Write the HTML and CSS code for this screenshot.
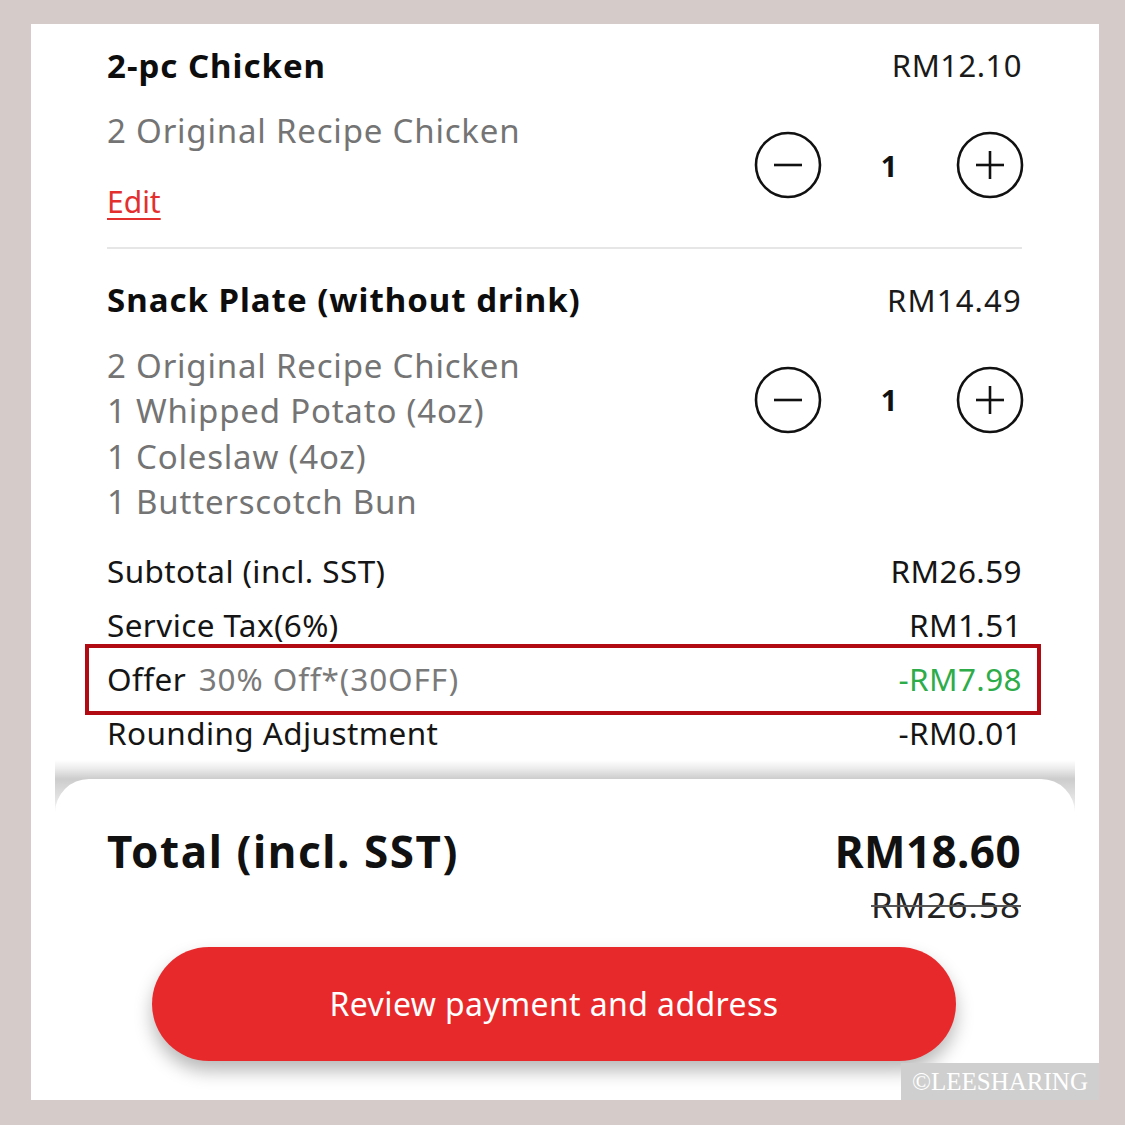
FILE: index.html
```html
<!DOCTYPE html>
<html>
<head>
<meta charset="utf-8">
<link rel="stylesheet" href="styles.css">
</head>
<body>
<div class="frame">
  <div class="content">
    <div class="item">
      <div class="item-head">
        <div class="item-title">2-pc Chicken</div>
        <div class="item-price">RM12.10</div>
      </div>
      <div class="item-body">
        <div class="item-info">
          <div class="desc">2 Original Recipe Chicken</div>
          <a class="edit">Edit</a>
        </div>
        <div class="qty">
          <svg class="qbtn" viewBox="0 0 68 68" width="68" height="68"><circle cx="34" cy="34" r="32" fill="none" stroke="#111" stroke-width="2.6"/><line x1="20" y1="34" x2="48" y2="34" stroke="#111" stroke-width="2.6"/></svg>
          <span class="qnum">1</span>
          <svg class="qbtn" viewBox="0 0 68 68" width="68" height="68"><circle cx="34" cy="34" r="32" fill="none" stroke="#111" stroke-width="2.6"/><line x1="20" y1="34" x2="48" y2="34" stroke="#111" stroke-width="2.6"/><line x1="34" y1="20" x2="34" y2="48" stroke="#111" stroke-width="2.6"/></svg>
        </div>
      </div>
    </div>
    <div class="divider"></div>
    <div class="item item2">
      <div class="item-head">
        <div class="item-title">Snack Plate (without drink)</div>
        <div class="item-price">RM14.49</div>
      </div>
      <div class="item-body">
        <div class="item-info">
          <div class="desc">2 Original Recipe Chicken</div>
          <div class="desc">1 Whipped Potato (4oz)</div>
          <div class="desc">1 Coleslaw (4oz)</div>
          <div class="desc">1 Butterscotch Bun</div>
        </div>
        <div class="qty">
          <svg class="qbtn" viewBox="0 0 68 68" width="68" height="68"><circle cx="34" cy="34" r="32" fill="none" stroke="#111" stroke-width="2.6"/><line x1="20" y1="34" x2="48" y2="34" stroke="#111" stroke-width="2.6"/></svg>
          <span class="qnum">1</span>
          <svg class="qbtn" viewBox="0 0 68 68" width="68" height="68"><circle cx="34" cy="34" r="32" fill="none" stroke="#111" stroke-width="2.6"/><line x1="20" y1="34" x2="48" y2="34" stroke="#111" stroke-width="2.6"/><line x1="34" y1="20" x2="34" y2="48" stroke="#111" stroke-width="2.6"/></svg>
        </div>
      </div>
    </div>
    <div class="summary">
      <div class="row"><span>Subtotal (incl. SST)</span><span>RM26.59</span></div>
      <div class="row"><span>Service Tax(6%)</span><span>RM1.51</span></div>
      <div class="row offer"><span>Offer <span class="code">30% Off*(30OFF)</span></span><span class="green">-RM7.98</span><div class="highlight"></div></div>
      <div class="row"><span>Rounding Adjustment</span><span>-RM0.01</span></div>
    </div>
  </div>
  <div class="sheet-wrap">
    <div class="sheet">
      <div class="total">
        <div class="total-label">Total (incl. SST)</div>
        <div class="total-prices">
          <div class="total-now">RM18.60</div>
          <div class="total-was">RM26.58</div>
        </div>
      </div>
      <div class="cta">Review payment and address</div>
    </div>
  </div>
  <div class="watermark">©LEESHARING</div>
</div>
</body>
</html>
```

FILE: styles.css
```css
html, body {
  margin: 0;
  padding: 0;
}
body {
  background: #d5cbc8;
  width: 1125px;
  height: 1125px;
  overflow: hidden;
  font-family: "Noto Sans", "Open Sans", sans-serif;
  color: #111;
}
.frame {
  position: relative;
  margin: 24px 26px 0 31px;
  height: 1076px;
  background: #fff;
  overflow: hidden;
}
.content {
  padding: 19px 77px 0 76px;
}
.item-head {
  display: flex;
  justify-content: space-between;
  align-items: center;
  height: 44px;
  margin-bottom: 21px;
}
.item-title {
  font-weight: 700;
  font-size: 33px;
  letter-spacing: 1px;
  color: #0d0d0d;
}
.item-price {
  font-size: 31px;
  letter-spacing: 0.5px;
  color: #1a1a1a;
}
.item2 .item-price {
  letter-spacing: 1.2px;
}
.item-body {
  display: flex;
  justify-content: space-between;
  align-items: flex-start;
}
.desc {
  font-size: 33px;
  line-height: 45.5px;
  letter-spacing: 0.8px;
  color: #747474;
}
.edit {
  display: inline-block;
  margin-top: 25px;
  font-size: 30px;
  line-height: 45px;
  color: #e3302f;
  text-decoration: underline;
  text-underline-offset: 5px;
  text-decoration-thickness: 2px;
}
.qty {
  display: flex;
  align-items: center;
  margin-top: 23px;
  margin-right: -2px;
}
.qbtn {
  display: block;
}
.qnum {
  width: 134px;
  text-align: center;
  font-weight: 700;
  font-size: 29px;
}
.divider {
  height: 2px;
  background: #e6e6e6;
  margin: 23px 0 29px;
}
.summary {
  margin-top: 19px;
}
.row {
  position: relative;
  display: flex;
  justify-content: space-between;
  align-items: center;
  height: 54px;
  font-size: 31.5px;
  letter-spacing: 0.4px;
  color: #151515;
}
.code {
  color: #7a7a7a;
  margin-left: 4px;
  letter-spacing: 0.9px;
}
.green {
  color: #2eac4a;
}
.highlight {
  position: absolute;
  left: -22px;
  right: -19px;
  top: -8px;
  bottom: -9px;
  border: 4px solid #b20a12;
}
.sheet-wrap {
  margin: 0 24px;
  padding-top: 19px;
  background: linear-gradient(to bottom, rgba(0, 0, 0, 0) 0px, rgba(0, 0, 0, 0.07) 8px, rgba(0, 0, 0, 0.2) 19px, rgba(0, 0, 0, 0.1) 40px, rgba(0, 0, 0, 0) 56px) no-repeat;
  background-size: 100% 56px;
  border-radius: 0 0 0 0;
}
.sheet {
  height: 341px;
  background: #fff;
  border-radius: 34px 34px 0 0;
  padding: 0 54px 0 52px;
}
.total {
  display: flex;
  justify-content: space-between;
  align-items: flex-start;
  padding-top: 44px;
}
.total-label {
  font-weight: 700;
  font-size: 44px;
  line-height: 56px;
  letter-spacing: 1.6px;
}
.total-prices {
  display: flex;
  flex-direction: column;
  align-items: flex-end;
}
.total-now {
  font-weight: 700;
  font-size: 44px;
  line-height: 56px;
  letter-spacing: 0.4px;
}
.total-was {
  font-size: 35px;
  line-height: 52px;
  letter-spacing: 1px;
  color: #222;
  text-decoration: line-through;
  text-decoration-color: #555;
  text-decoration-thickness: 2px;
}
.cta {
  margin: 16px 0 0 45px;
  width: 804px;
  height: 114px;
  border-radius: 57px;
  background: #e8292b;
  color: #fff;
  font-size: 32px;
  letter-spacing: 0.4px;
  display: flex;
  align-items: center;
  justify-content: center;
  box-shadow: 0 10px 18px rgba(0, 0, 0, 0.28);
}
.watermark {
  position: absolute;
  right: 0;
  bottom: 0;
  width: 198px;
  height: 37px;
  background: #cfcfcf;
  color: #fff;
  font-family: "Liberation Serif", "DejaVu Serif", serif;
  font-size: 25px;
  line-height: 37px;
  text-align: center;
}
```
